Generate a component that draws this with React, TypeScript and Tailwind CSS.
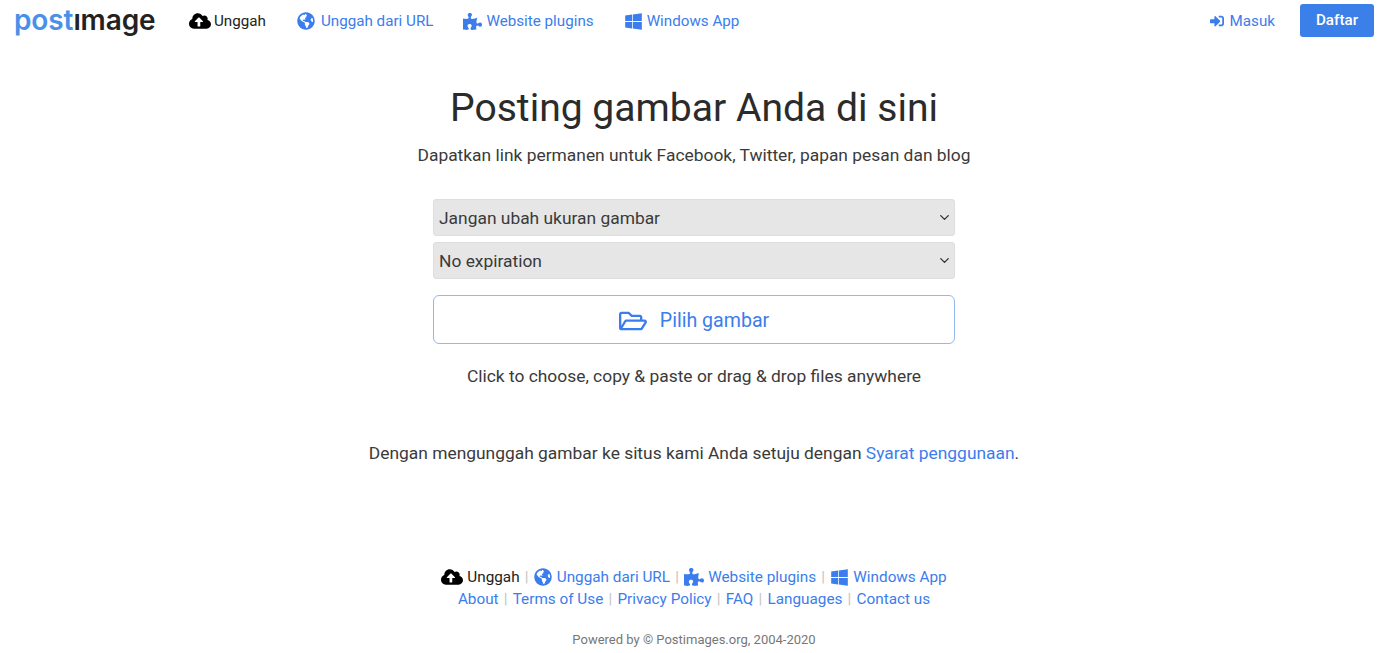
import React from "react";
import {
    FaCloudUploadAlt,
    FaGlobeAmericas,
    FaPuzzlePiece,
    FaWindows,
    FaSignInAlt,
    FaRegFolderOpen,
} from "react-icons/fa";
import { ChevronDown } from "lucide-react";

function Sep() {
    return <span className="mx-[5.2px] text-[#c4c4c4]">|</span>;
}

function FakeSelect({ label }: { label: string }) {
    return (
        <div className="flex h-[37px] items-center justify-between rounded-[3px] border border-[#dedede] bg-[#e6e6e6] pr-[2px] pl-[5px] text-[17.4px] text-[#3a3a3a]">
            <span className="pt-[1px]">{label}</span>
            <ChevronDown size={15} strokeWidth={2.2} className="text-[#333]" />
        </div>
    );
}

export default function App() {
    return (
        <div className="flex h-[653px] w-[1380px] flex-col overflow-hidden bg-white font-['Roboto',sans-serif] text-[#3a3a3a]">
            <nav className="flex h-[42px] items-center pr-[6px] pl-[14px] text-[15.2px]">
                <div className="mr-[34px] -mt-[3px] flex w-[141px] font-['Inter',sans-serif] text-[28px] leading-none font-semibold tracking-[-0.1px]">
                    <span className="text-[#4a90e8]">post</span>
                    <span className="text-[#222]">ımage</span>
                </div>
                <a className="mt-[1px] mr-[31px] flex items-center text-[#222]">
                    <FaCloudUploadAlt size={22} className="mr-[3px] text-black" />
                    Unggah
                </a>
                <a className="mt-[1px] mr-[30px] flex items-center text-[#3b7ded]">
                    <FaGlobeAmericas size={18} className="mr-[6px]" />
                    Unggah dari URL
                </a>
                <a className="mt-[1px] mr-[30px] flex items-center text-[#3b7ded]">
                    <FaPuzzlePiece size={19} className="mr-[4px]" />
                    Website plugins
                </a>
                <a className="mt-[1px] flex items-center text-[#3b7ded]">
                    <FaWindows size={19} className="mr-[4px]" />
                    Windows App
                </a>
                <a className="mt-[1px] mr-[25px] ml-auto flex items-center text-[#3b7ded]">
                    <FaSignInAlt size={14} className="mr-[6px]" />
                    Masuk
                </a>
                <a className="mb-[1px] flex h-[33px] w-[74px] items-center justify-center rounded-[3px] bg-[#3b7fe8] font-medium text-white">
                    Daftar
                </a>
            </nav>

            <main className="flex flex-col items-center pl-[8px]">
                <h1 className="mt-[38px] text-[39.1px] leading-[56px] font-normal text-[#2b2b2b]">
                    Posting gambar Anda di sini
                </h1>
                <p className="mt-[7px] text-[17.4px] leading-[24px]">
                    Dapatkan link permanen untuk Facebook, Twitter, papan pesan dan blog
                </p>
                <div className="mt-[32px] flex w-[522px] flex-col gap-[6px]">
                    <FakeSelect label="Jangan ubah ukuran gambar" />
                    <FakeSelect label="No expiration" />
                </div>
                <button className="mt-[16px] flex h-[49px] w-[522px] items-center justify-center rounded-[6px] border border-[#94b6f5] bg-white pt-[2px] text-[19.6px] text-[#3b7ded]">
                    <FaRegFolderOpen size={28} className="mr-[13px]" />
                    Pilih gambar
                </button>
                <p className="mt-[20px] text-[17.4px] leading-[24px]">
                    Click to choose, copy &amp; paste or drag &amp; drop files anywhere
                </p>
                <p className="mt-[53px] text-[17.4px] leading-[24px]">
                    Dengan mengunggah gambar ke situs kami Anda setuju dengan{" "}
                    <a className="text-[#3b7ded]">Syarat penggunaan</a>.
                </p>
            </main>

            <footer className="mt-[101px] flex flex-col items-center pl-[8px] text-[15.3px] leading-[22px] text-[#3b7ded]">
                <div className="flex items-center">
                    <a className="flex items-center text-[#222]">
                        <FaCloudUploadAlt size={22} className="mr-[4px] text-black" />
                        Unggah
                    </a>
                    <Sep />
                    <a className="flex items-center">
                        <FaGlobeAmericas size={18} className="mr-[5px]" />
                        Unggah dari URL
                    </a>
                    <Sep />
                    <a className="flex items-center">
                        <FaPuzzlePiece size={20} className="mr-[4px]" />
                        Website plugins
                    </a>
                    <Sep />
                    <a className="flex items-center">
                        <FaWindows size={19} className="mr-[4px]" />
                        Windows App
                    </a>
                </div>
                <div>
                    <a>About</a>
                    <Sep />
                    <a>Terms of Use</a>
                    <Sep />
                    <a>Privacy Policy</a>
                    <Sep />
                    <a>FAQ</a>
                    <Sep />
                    <a>Languages</a>
                    <Sep />
                    <a>Contact us</a>
                </div>
                <p className="mt-[20px] text-[13px] leading-[20px] text-[#777]">
                    Powered by © Postimages.org, 2004-2020
                </p>
            </footer>
        </div>
    );
}
